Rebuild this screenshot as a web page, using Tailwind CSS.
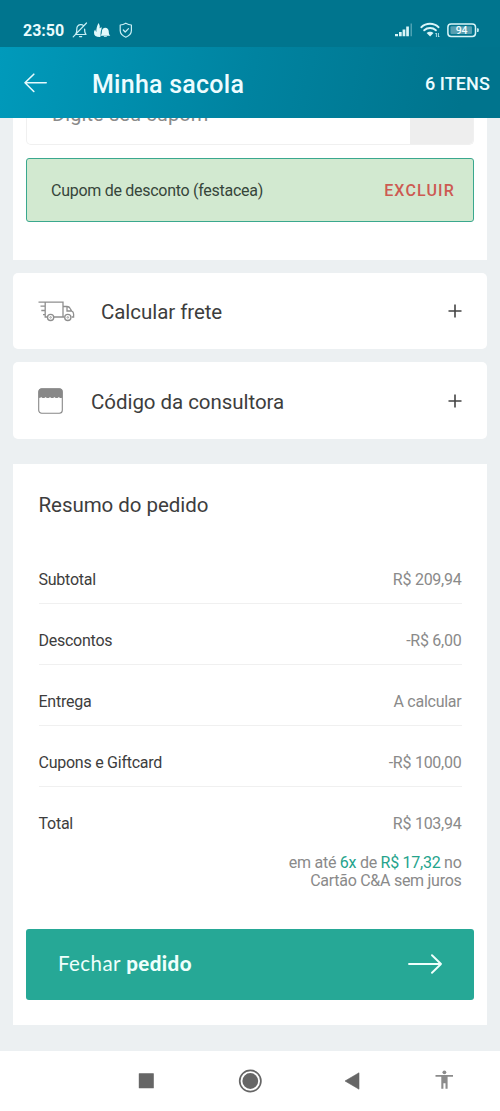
<!DOCTYPE html>
<html lang="pt-BR">
<head>
<meta charset="utf-8">
<meta name="viewport" content="width=device-width, initial-scale=1">
<title>Minha sacola</title>
<script src="https://cdn.jsdelivr.net/npm/@tailwindcss/browser@4"></script>
</head>
<body class="bg-[#ecf0f2] font-['Roboto','Liberation_Sans',sans-serif] text-[#3d3d3d]">
<div class="flex h-[1111px] w-[500px] flex-col overflow-hidden">

  <!-- Status bar -->
  <div class="flex h-[47px] shrink-0 items-center bg-[#00758e] pt-[13px] pl-[23px] pr-[20px] text-white">
    <span class="w-[49px] whitespace-nowrap pt-px text-[16px] font-bold leading-none text-[#e9fbfd]">23:50</span>
    <svg class="h-[17px] w-[60px]" viewBox="0 0 60 17" fill="none" stroke="#c9eff5" stroke-width="1.2" stroke-linecap="round" stroke-linejoin="round">
      <path d="M3.500 12.500H14c-1.400-1.200-1.400-2.500-1.400-5.500M3.500 12.500c1.300-1.200 1.300-3 1.300-5.500 0-2.400 1.500-4 3.500-4.400 1.400-.2 2.500.2 3.200 1M7.500 14.600h2.200M1.200 14.800 14.500 1"/>
      <path d="M26.500 1c1.200 2 1.700 3.500 1 5.300 1-.3 1.500-.8 1.800-1.600.9 2.300-.6 3.500-.6 5.600l-.3 4.600c-4 .2-6.400-1.100-6.400-4.200 0-1.600.6-2.500 1.200-3.300.3 1 .5 1.900 1.200 2.600C24.100 7 25 4 26.500 1Z" fill="#e4f9fb" stroke="none"/>
      <path d="M28.300 13.800c1.500-1.400 1.400-2.600 1.600-4.800.2-1.900 1.400-3.200 3.400-3.200s3.200 1.300 3.400 3.200c.2 2.200.1 3.400 1.600 4.800ZM31.900 14.200h2.900v.8h-2.900Z" fill="#e4f9fb" stroke="none"/>
      <path d="M53.800 1.200c1.800 1 3.600 1.600 5.600 1.800v5.500c0 3.300-2.500 5.400-5.600 6.700-3.100-1.300-5.600-3.400-5.600-6.700V3c2-.2 3.800-.8 5.600-1.800ZM51.300 8l1.900 2 3.300-3.400"/>
    </svg>
    <svg class="ml-auto h-[18px] w-[86px]" viewBox="0 0 86 18" fill="none">
      <g fill="#d9f5f8"><path d="M1 13h3v2.200H1zM5 11h2.700v4.200H5zM8.600 8.500h2.700v6.700H8.600zM12.200 5.500h2.700v9.700h-2.700z"/><path d="M16.500 2.500H18v12.700h-1.500z" opacity=".35"/></g>
      <g stroke="#d9f5f8" stroke-width="1.900" stroke-linecap="round"><path d="M27.300 6.200c4.900-4.600 12.400-4.600 17.300 0M30.200 9.300c3.400-3 8.300-3 11.700 0"/></g>
      <path d="M32.600 12.100c2-1.900 4.900-1.900 6.900 0l-3.400 3.300Z" fill="#d9f5f8"/>
      <path d="M42.400 12v4m-1-3 1-1M44.400 12v4m0 0 1-1" stroke="#bfe9f0" stroke-width=".9"/>
      <rect x="53.900" y="2.900" width="27.600" height="12.600" rx="3.200" stroke="#d9f5f8" stroke-width="1.500"/>
      <rect x="56.500" y="5.300" width="21.500" height="7.800" rx="1" fill="#569fb1"/>
      <path d="M83 7.200h.8q1 0 1 1v1.900q0 1-1 1H83Z" fill="#bfe9f0"/>
      <text x="67.600" y="13" text-anchor="middle" font-family="Roboto" font-weight="500" font-size="10.500" fill="#f0fdff">94</text>
    </svg>
  </div>

  <!-- App header -->
  <header class="flex h-[71px] shrink-0 items-center bg-[linear-gradient(102deg,#009abb_0%,#0083a0_50%,#00748d_92%)] pl-[24px] pr-[10px] pt-[1px]">
    <svg class="h-[20px] w-[23px]" viewBox="0 0 23 20" fill="none" stroke="#e6fafd" stroke-width="1.600" stroke-linecap="round" stroke-linejoin="round"><path d="M22.200 9.800H1M9.800 1.200 1 9.800l8.800 8.700"/></svg>
    <h1 class="ml-[45px] pt-[2px] text-[25px] font-medium leading-none tracking-[0.25px] text-[#edfcff]">Minha sacola</h1>
    <span class="ml-auto whitespace-nowrap pt-px text-[18px] font-medium leading-none tracking-[0.1px] text-[#edfcff]">6 ITENS</span>
  </header>

  <main class="flex h-[933px] shrink-0 flex-col overflow-hidden px-[13px]">
    <!-- Coupon -->
    <section class="flex h-[142px] shrink-0 flex-col bg-white px-[13px]">
      <div class="flex h-[27px] shrink-0 overflow-hidden rounded-b-[5px] border border-t-0 border-[#f0f0f0]">
        <div class="flex flex-1 items-start pl-[25px]"><span class="-mt-[16px] text-[20px] leading-[24px] tracking-[0.1px] text-[#8a8a8a]">Digite seu cupom</span></div>
        <div class="w-[63px] bg-[#eeeeee]"></div>
      </div>
      <div class="mt-[13px] flex h-[64px] shrink-0 items-center justify-between rounded-[3px] border-[1.500px] border-[#3aa88e] bg-[#d2e9d0] pl-[24px] pr-[18px] pt-[2px]">
        <span class="text-[16px] tracking-[-0.280px] text-[#36453a]">Cupom de desconto (festacea)</span>
        <span class="text-[16px] font-medium tracking-[1.150px] text-[#cd5a52]">EXCLUIR</span>
      </div>
    </section>

    <!-- Shipping -->
    <section class="mt-[13px] flex h-[76px] shrink-0 items-center rounded-[5px] bg-white pl-[25px] pr-[25px]">
      <svg class="h-[22px] w-[37px]" viewBox="0 0 37 22" fill="none" stroke="#8f8f8f" stroke-width="1.300">
        <path d="M.5 2.200H25V17M7.200 2.200V17H9M16 17h10.300M25 6.500h4c1.600 0 2.500.6 3.200 2l1.300 2.400c1.500.6 2.100 1.500 2.100 3.200V17h-2M29 6.500v4.500h4.500M2.500 6.200h4.700M3.300 10.500h3.900M5 14.700h2.200"/>
        <circle cx="12.600" cy="17.400" r="3.100" fill="#fff"/><circle cx="29.800" cy="17.400" r="3.100" fill="#fff"/>
        <circle cx="12.600" cy="17.400" r=".8" stroke-width=".8"/><circle cx="29.800" cy="17.400" r=".8" stroke-width=".8"/>
      </svg>
      <h2 class="ml-[26px] pt-[3px] text-[20.500px] tracking-[-0.060px]">Calcular frete</h2>
      <svg class="ml-auto h-[14px] w-[14px]" viewBox="0 0 14 14" stroke="#444" stroke-width="1.600"><path d="M.5 7h13M7 .5v13"/></svg>
    </section>

    <!-- Consultant code -->
    <section class="mt-[13px] flex h-[77px] shrink-0 items-center rounded-[5px] bg-white pl-[25px] pr-[25px]">
      <svg class="h-[26px] w-[25px]" viewBox="0 0 25 26" fill="none">
        <rect x=".7" y=".7" width="23.600" height="24.600" rx="3" stroke="#888" stroke-width="1.100"/>
        <path d="M.7 9.500V3.500q0-3 3-3h17.600q3 0 3 3v6q-1.500 1-3 0-.5-.8-1 0-1.700 1.200-3.400 0-.5-.8-1 0-1.700 1.200-3.400 0-.5-.8-1 0-1.700 1.200-3.400 0-.5-.8-1 0-1.700 1.200-3.400 0-.5-.8-1 0-1 .8-2 0Z" fill="#888"/>
      </svg>
      <h2 class="ml-[28px] pt-[3px] text-[20.500px] tracking-[-0.050px]">Código da consultora</h2>
      <svg class="ml-auto h-[14px] w-[14px]" viewBox="0 0 14 14" stroke="#444" stroke-width="1.600"><path d="M.5 7h13M7 .5v13"/></svg>
    </section>

    <!-- Order summary -->
    <section class="mt-[25px] flex h-[561px] shrink-0 flex-col bg-white px-[13px]">
      <h2 class="mt-[29px] px-[12.500px] text-[20.500px] leading-[24px] tracking-[-0.050px]">Resumo do pedido</h2>
      <dl class="mx-[12.500px] mt-[26px] text-[16px] tracking-[-0.250px] [&_dd]:text-[#8a8a8a]">
        <div class="flex h-[61px] items-center justify-between border-b border-[#f0f0f0] pt-[13px]"><dt>Subtotal</dt><dd>R$ 209,94</dd></div>
        <div class="flex h-[61px] items-center justify-between border-b border-[#f0f0f0] pt-[13px]"><dt>Descontos</dt><dd>-R$ 6,00</dd></div>
        <div class="flex h-[61px] items-center justify-between border-b border-[#f0f0f0] pt-[13px]"><dt>Entrega</dt><dd>A calcular</dd></div>
        <div class="flex h-[61px] items-center justify-between border-b border-[#f0f0f0] pt-[13px]"><dt>Cupons e Giftcard</dt><dd>-R$ 100,00</dd></div>
        <div class="flex h-[61px] items-center justify-between pt-[13px]"><dt>Total</dt><dd>R$ 103,94</dd></div>
      </dl>
      <p class="mx-[12.500px] mt-[6px] text-right text-[16px] leading-[18px] tracking-[-0.270px] text-[#8a8a8a]">em até <span class="text-[#25a38c]">6x</span> de <span class="text-[#25a38c]">R$ 17,32</span> no<br>Cartão C&amp;A sem juros</p>
      <button class="mt-auto mb-[25px] flex h-[71px] shrink-0 items-center justify-between rounded-[3px] bg-[#26a896] pl-[32px] pr-[32px] pb-px text-left font-['Lato','Roboto',sans-serif] text-[#effffc]">
        <span class="whitespace-nowrap pb-[2px] text-[20.500px] tracking-[0.420px]">Fechar <b class="font-black">pedido</b></span>
        <svg class="h-[20px] w-[34px]" viewBox="0 0 34 20" fill="none" stroke="#effffc" stroke-width="1.900" stroke-linecap="round" stroke-linejoin="round"><path d="M1 10h32M24 1.200 33 10l-9 8.800"/></svg>
      </button>
    </section>
  </main>

  <!-- Navigation bar -->
  <nav class="flex h-[60px] shrink-0 items-center bg-white">
    <svg class="h-[60px] w-[500px]" viewBox="0 1 500 60" fill="#666">
      <rect x="138.800" y="23.300" width="15" height="15" rx=".5"/>
      <circle cx="250.300" cy="31" r="10.600" fill="none" stroke="#666" stroke-width="1.700"/><circle cx="250.300" cy="31" r="7.900"/>
      <path d="M359 22.800v16.400L345 31Z" stroke="#666" stroke-width=".6" stroke-linejoin="round"/>
      <g fill="#8b8b8b"><circle cx="444.400" cy="22.300" r="1.900"/><path d="M435.500 24.900h17.500v1.900h-5.400v12h-2.100v-5.600h-2.100v5.600h-2.100v-12h-5.800Z"/></g>
    </svg>
  </nav>
</div>
</body>
</html>
